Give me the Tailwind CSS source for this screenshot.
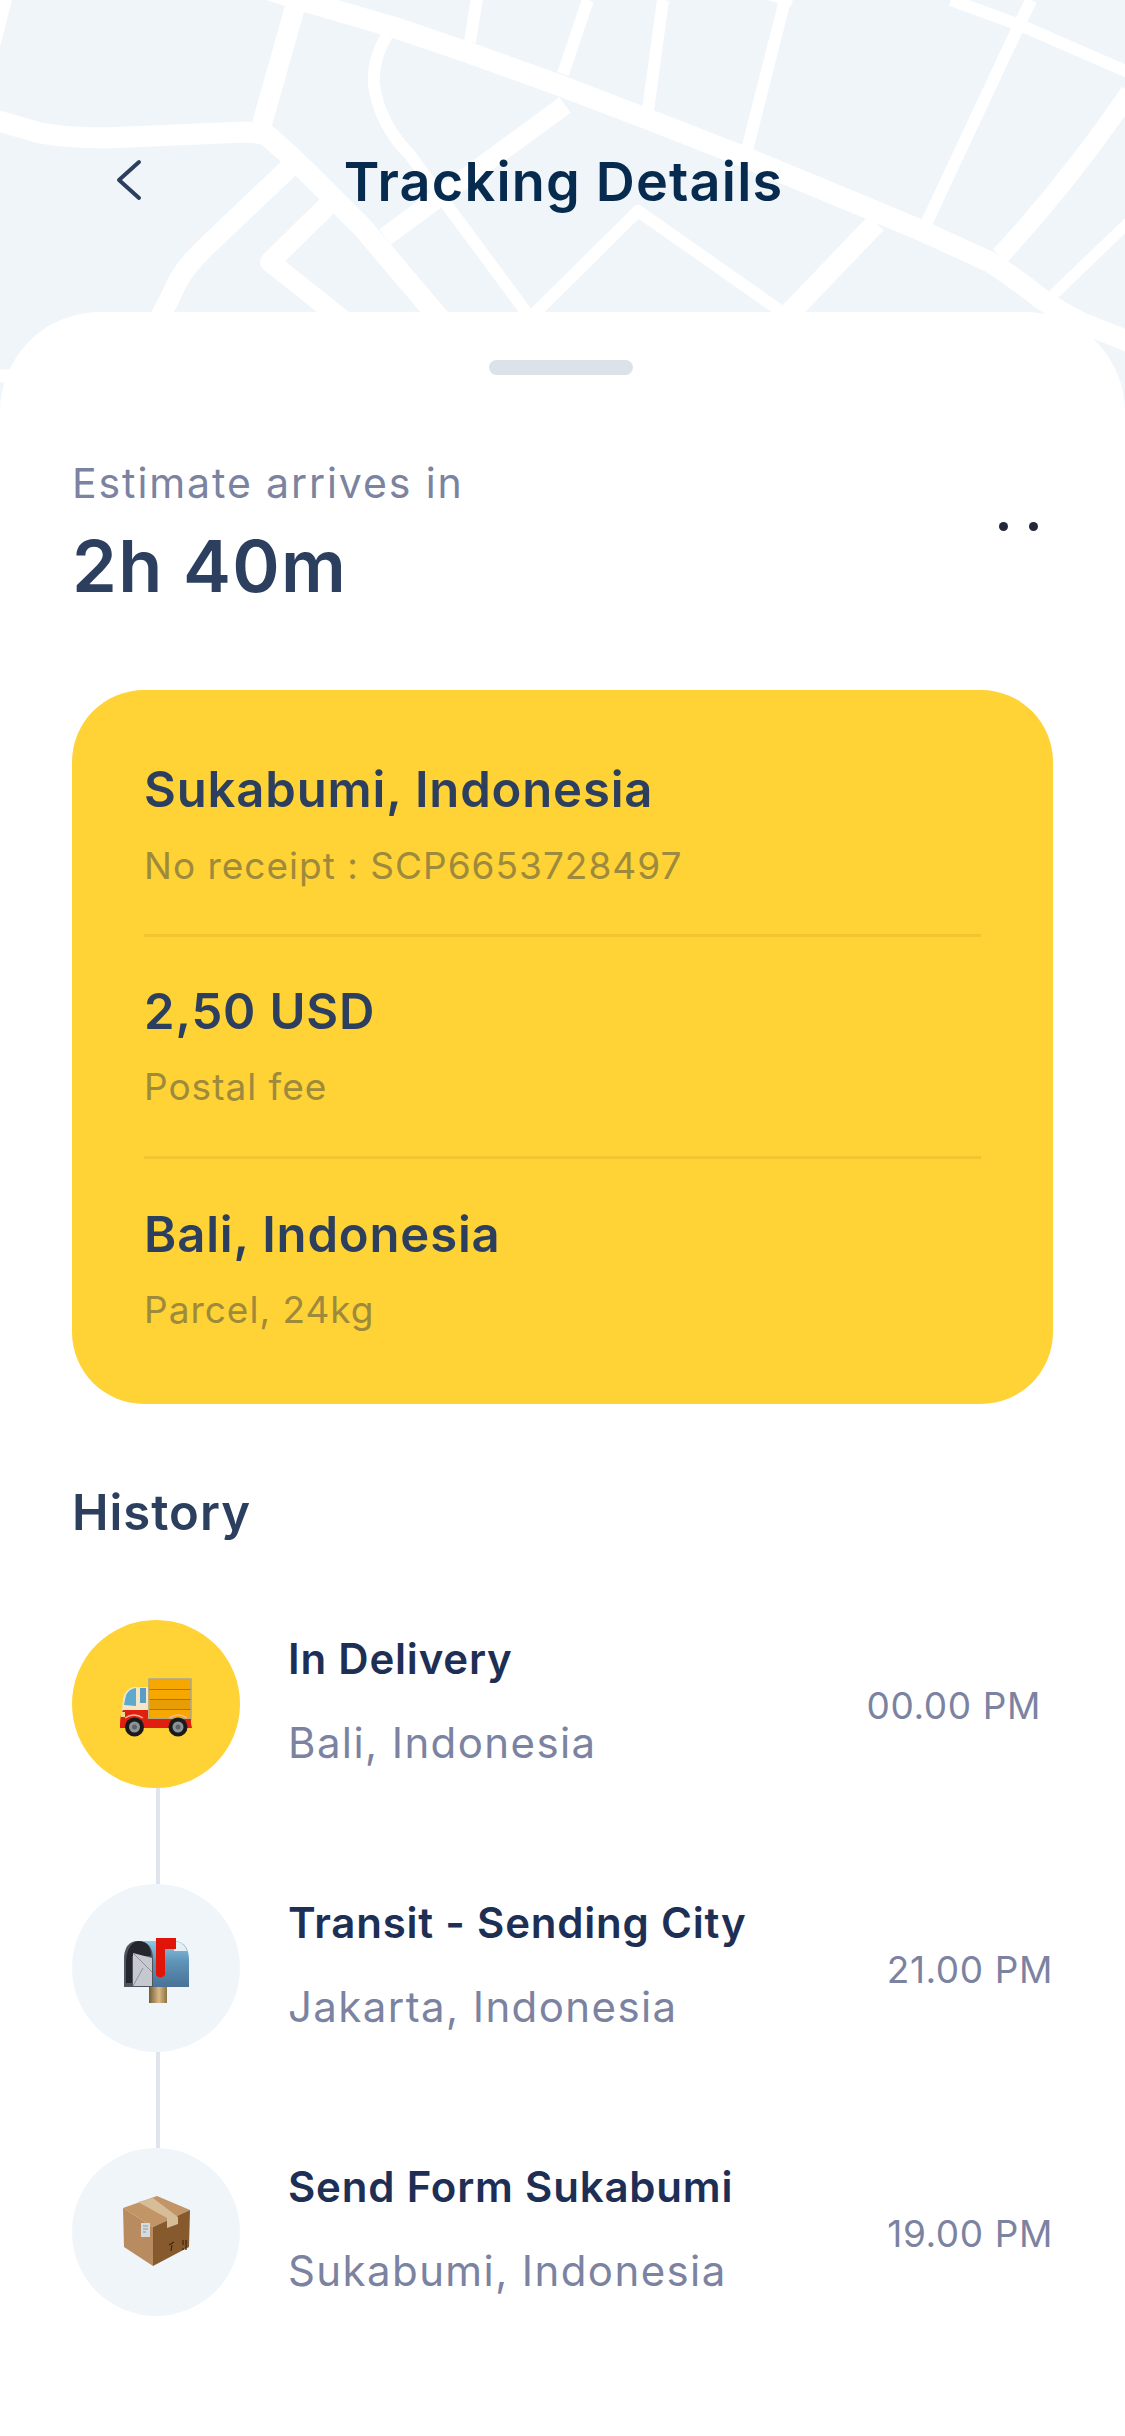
<!DOCTYPE html>
<html lang="en">
<head>
  <meta charset="UTF-8" />
  <title>Tracking Details</title>
  <script src="https://cdn.jsdelivr.net/npm/@tailwindcss/browser@4"></script>
</head>
<body class="bg-white font-['Inter',sans-serif]">
  <div class="relative w-[1125px] h-[2436px] bg-[#f0f5fa] overflow-hidden">

    <!-- Map -->
    <svg class="absolute left-0 top-0" width="1125" height="420" viewBox="0 0 1125 420" fill="none" stroke="#fff" stroke-linejoin="round">
      <path stroke-width="21" d="M270 -10L305 1.500L393 27L464 51L556 84L650 120L742 156L865 207L920 230L990 262Q1015 278 1040 298Q1060 312 1082 323L1130 342"/>
      <path stroke-width="21" d="M-5 120L40 133Q70 138 105 138L245 132Q258 132 268 136Q290 155 311 176L363 228L434 312L445 325"/>
      <path stroke-width="20" d="M297 0L262 124"/>
      <path stroke-width="20" d="M289 168L210 243Q185 266 176 285Q168 303 156 324"/>
      <path stroke-width="20" d="M327 206L270 262L343 320"/>
      <path stroke-width="19" d="M565 105L385 237"/>
      <path stroke-width="12" d="M387 35Q372 60 374 85Q380 125 410 155L532 320"/>
      <path stroke-width="12" d="M526 322L638 211L782 312"/>
      <path stroke-width="21" d="M876 223L785 318"/>
      <path stroke-width="12" d="M477 -2L470 42"/>
      <path stroke-width="12" d="M588 0L563 74"/>
      <path stroke-width="12" d="M663 0L648 110"/>
      <path stroke-width="12" d="M785 0L747 150"/>
      <path stroke-width="8" d="M768 -4L792 3"/>
      <path stroke-width="12" d="M951 0L1020 25L1130 73"/>
      <path stroke-width="12" d="M1031 0L926 224"/>
      <path stroke-width="19" d="M1130 92Q1070 180 1000 256"/>
      <path stroke-width="11" d="M1130 221L1052 296"/>
      <path fill="#fff" stroke="none" d="M0 0H12L0 47Z"/>
      <path stroke-width="13" d="M0 376H15"/>
    </svg>

    <!-- Header -->
    <div class="relative flex justify-center h-[312px] pt-[152px] pl-[2px]">
      <svg class="absolute left-[112px] top-[156px]" width="32" height="48" viewBox="0 0 32 48" fill="none" stroke="#2d3f5f" stroke-width="4" stroke-linecap="round" stroke-linejoin="round">
        <path d="M27 6L7 24L27 42"/>
      </svg>
      <h1 class="text-[54px] leading-[60px] tracking-[1.2px] font-semibold text-[#062b4f]">Tracking Details</h1>
    </div>

    <!-- Sheet -->
    <div class="relative bg-white rounded-t-[100px] h-[2124px] px-[72px]">
      <div class="flex justify-center pt-[48px] pr-[3px]">
        <div class="w-[144px] h-[15px] rounded-full bg-[#dde1ea]"></div>
      </div>

      <div class="flex items-start justify-between mt-[83px]">
        <div>
          <p class="text-[41px] leading-[50px] tracking-[1.9px] text-[#7b83a1]">Estimate arrives in</p>
          <p class="mt-[16px] text-[72px] leading-[84px] tracking-[1.3px] font-semibold text-[#2d3f5f]">2h 40m</p>
        </div>
        <div class="flex gap-[21px] pt-[64px] pr-[15px]">
          <span class="w-[9px] h-[9px] rounded-full bg-[#22273a]"></span>
          <span class="w-[9px] h-[9px] rounded-full bg-[#22273a]"></span>
        </div>
      </div>

      <!-- Summary card -->
      <div class="mt-[82px] w-[981px] h-[714px] rounded-[72px] bg-[#ffd236] px-[72px] pt-[60px]">
        <div class="h-[187px] border-b-[3px] border-[#f2c42f]">
          <p class="text-[49px] leading-[80px] tracking-[0.85px] font-semibold text-[#2d3f5f]">Sukabumi, Indonesia</p>
          <p class="mt-[1px] text-[37px] leading-[70px] tracking-[1px] text-[#9e8a3c]">No receipt : SCP6653728497</p>
        </div>
        <div class="h-[222px] pt-[35px] border-b-[3px] border-[#f2c42f]">
          <p class="text-[49px] leading-[80px] tracking-[0.85px] font-semibold text-[#2d3f5f]">2,50 USD</p>
          <p class="text-[37px] leading-[70px] tracking-[1px] text-[#9e8a3c]">Postal fee</p>
        </div>
        <div class="pt-[36px]">
          <p class="text-[49px] leading-[80px] tracking-[0.85px] font-semibold text-[#2d3f5f]">Bali, Indonesia</p>
          <p class="text-[37px] leading-[70px] tracking-[1px] text-[#9e8a3c]">Parcel, 24kg</p>
        </div>
      </div>

      <h2 class="mt-[79px] text-[49px] leading-[60px] tracking-[1px] font-semibold text-[#2d3f5f]">History</h2>

      <!-- Timeline -->
      <div class="mt-[77px] flex flex-col gap-[96px]">

        <div class="relative flex items-center h-[168px]">
          <div class="flex items-center justify-center w-[168px] h-[168px] rounded-full bg-[#ffd236]">
            <svg width="90" height="80" viewBox="1 -1 90 80">
              <rect x="39" y="14" width="42" height="40" fill="#f6a800" stroke="#a9a796" stroke-width="1.5"/>
              <rect x="40" y="35" width="40" height="9.5" fill="#e89c06"/>
              <path d="M39.500 24.500H80.500M39.500 34.500H80.500M39.500 44.500H80.500" stroke="#b0700c" stroke-width="1.2"/>
              <path d="M12 46L13 33Q15 25 23 22H38V46Z" fill="#f4e7c6"/>
              <path d="M14 40L16 30Q19 24 26 23V41Z" fill="#5fa9cf"/>
              <rect x="30" y="23" width="6" height="15" fill="#5a9cc2"/>
              <path d="M10 60Q10 50 13 45H38V54H81V58L82 63H10Z" fill="#df1f10"/>
              <path d="M15 53Q24 47 33 53M59 53Q68 47 77 53" stroke="#f2b6a0" stroke-width="1.500" fill="none"/>
              <rect x="11" y="47" width="4" height="5" fill="#f3d98a"/>
              <circle cx="24.500" cy="62" r="9.500" fill="#1a1a1c"/>
              <circle cx="24.500" cy="62" r="5.500" fill="#8e9398"/>
              <circle cx="24.500" cy="62" r="2.500" fill="#5e6368"/>
              <circle cx="68" cy="62" r="9.500" fill="#1a1a1c"/>
              <circle cx="68" cy="62" r="5.500" fill="#8e9398"/>
              <circle cx="68" cy="62" r="2.500" fill="#5e6368"/>
            </svg>
          </div>
          <span class="absolute left-[84px] top-[168px] w-[4px] h-[96px] bg-[#e0e4ec]"></span>
          <div class="ml-[48px] -mt-[6px] flex-1">
            <p class="text-[42px] leading-[60px] tracking-[0.8px] font-semibold text-[#1e2f55]">In Delivery</p>
            <p class="mt-[24px] text-[42px] leading-[60px] tracking-[1.4px] text-[#7b83a1]">Bali, Indonesia</p>
          </div>
          <span class="mt-[4px] mr-[12px] text-[37px] tracking-[0.6px] text-[#7b83a1]">00.00 PM</span>
        </div>

        <div class="relative flex items-center h-[168px]">
          <div class="flex items-center justify-center w-[168px] h-[168px] rounded-full bg-[#f0f5fa]">
            <svg width="90" height="80" viewBox="1 -2 90 80">
              <defs>
                <linearGradient id="boxBlue" x1="0" y1="0" x2="0" y2="1">
                  <stop offset="0" stop-color="#8cc8e2"/>
                  <stop offset="0.45" stop-color="#5f93b8"/>
                  <stop offset="1" stop-color="#497296"/>
                </linearGradient>
                <linearGradient id="post" x1="0" y1="0" x2="1" y2="0">
                  <stop offset="0" stop-color="#6e5c3a"/>
                  <stop offset="0.55" stop-color="#dcb984"/>
                  <stop offset="1" stop-color="#8a7344"/>
                </linearGradient>
              </defs>
              <rect x="39" y="57" width="18" height="16" fill="url(#post)"/>
              <path d="M14 57V30Q14 11 30 11H66Q79 13 79 30V57Z" fill="url(#boxBlue)"/>
              <path d="M64 12H68Q75 14 77 21H64Z" fill="#e6eef2"/>
              <path d="M14 57V30Q14 11 28 11Q43 11 43 30V57Z" fill="#4f555d"/>
              <path d="M16 30Q18 12 29 11Q41 12 41 26H22V53H16Z" fill="#25252e"/>
              <path d="M23 23L42 28V56H23Z" fill="#c6c8cf"/>
              <path d="M23 23L42 42M23 56L33 38" stroke="#8f929a" stroke-width="1" fill="none"/>
              <path d="M46 8H66V19H55V45Q50 50 46 45Z" fill="#e01408"/>
            </svg>
          </div>
          <span class="absolute left-[84px] top-[168px] w-[4px] h-[96px] bg-[#e0e4ec]"></span>
          <div class="ml-[48px] -mt-[6px] flex-1">
            <p class="text-[42px] leading-[60px] tracking-[0.8px] font-semibold text-[#1e2f55]">Transit - Sending City</p>
            <p class="mt-[24px] text-[42px] leading-[60px] tracking-[1.4px] text-[#7b83a1]">Jakarta, Indonesia</p>
          </div>
          <span class="mt-[4px] text-[37px] tracking-[0.6px] text-[#7b83a1]">21.00 PM</span>
        </div>

        <div class="relative flex items-center h-[168px]">
          <div class="flex items-center justify-center w-[168px] h-[168px] rounded-full bg-[#f0f5fa]">
            <svg width="90" height="80" viewBox="1 -3 90 80">
              <path d="M47 1L80 15L43 32L13 13Z" fill="#c19565"/>
              <path d="M13 13L43 32V71L14 52Z" fill="#b98b60"/>
              <path d="M80 15L43 32V71L79 52Z" fill="#875a2e"/>
              <path d="M28 7L43 3L68 22V29L57 33V23Z" fill="#d6bd98"/>
              <rect x="31" y="28" width="9" height="14" fill="#d5dade"/>
              <path d="M33 31H38M33 34H38M33 37H36" stroke="#8f99a3" stroke-width="1"/>
              <path d="M59 50L64 47M62 50L61 56M73 45V50M76 45V55M73 53V55" stroke="#3a2614" stroke-width="1.200" fill="none"/>
            </svg>
          </div>
          <div class="ml-[48px] -mt-[6px] flex-1">
            <p class="text-[42px] leading-[60px] tracking-[0.8px] font-semibold text-[#1e2f55]">Send Form Sukabumi</p>
            <p class="mt-[24px] text-[42px] leading-[60px] tracking-[1.4px] text-[#7b83a1]">Sukabumi, Indonesia</p>
          </div>
          <span class="mt-[4px] text-[37px] tracking-[0.6px] text-[#7b83a1]">19.00 PM</span>
        </div>
      </div>
    </div>
  </div>
</body>
</html>
